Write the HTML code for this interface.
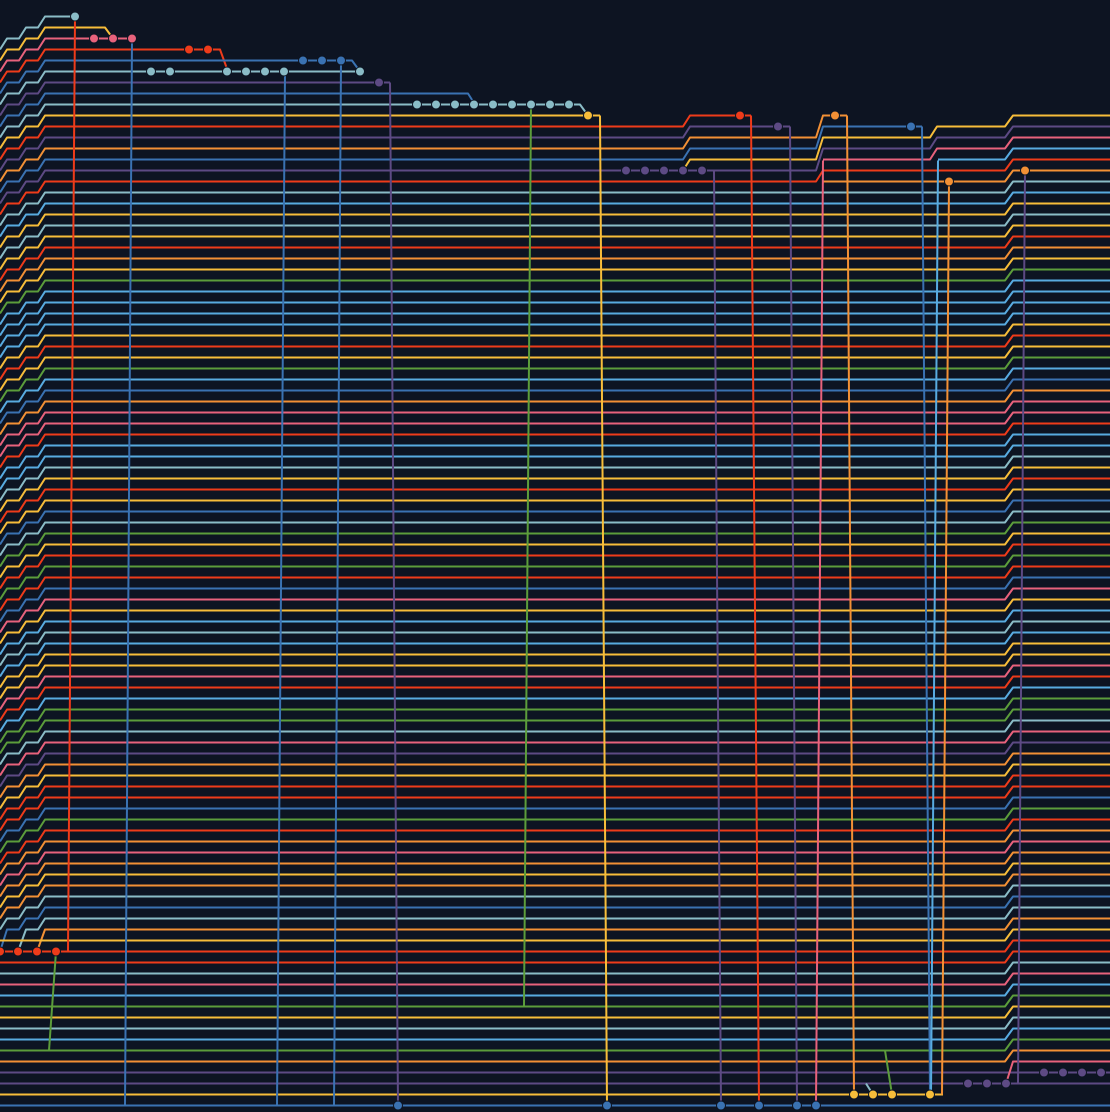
<!DOCTYPE html>
<html><head><meta charset="utf-8">
<style>
html,body{margin:0;padding:0;background:#0d1422;}
svg{display:block;}
</style></head>
<body>
<svg id="g" width="1110" height="1112" viewBox="0 0 1110 1112" xmlns="http://www.w3.org/2000/svg">
<rect width="1110" height="1112" fill="#0d1422"/>
</svg>
<script>
(function(){
var C={Y:"#f7bd3a",O:"#f29035",R:"#ee3b1a",P:"#5d4a84",B:"#3a72b2",C:"#8abcc7",L:"#58abe0",G:"#5c9d3b",K:"#e8627c"};
var cols="CYKRBCPBC"+"YRPOBPRCLYCYROYGLLLLYRYGLBOKKRL"+"LCYRYBCGYRGRBKYLCLYYKRLGGCKPOY"+"RRBGROKOYOCBCOYRRCKLGYCLGOPPYB";
function Y(k){return 16.5+11*k;}
var svg=document.getElementById("g");
var paths=[],verts=[],dots=[];
function P(c,d){paths.push([c,d]);}
function st(k){return "M0,"+Y(k+3)+" L7,"+Y(k+2)+" H19 L26,"+Y(k+1)+" H38 L45,"+Y(k);}
P("C",st(0)+" H75");
P("Y",st(1)+" H105 L113,"+Y(2));
P("K",st(2)+" H132");
P("R",st(3)+" H220 L228,"+Y(5));
P("B",st(4)+" H352 L360,"+Y(5));
P("C",st(5)+" H360");
P("P",st(6)+" H390");
P("B",st(7)+" H468 L475,"+Y(8));
P("C",st(8)+" H580 L588,"+Y(9));
P("Y",st(9)+" H600");
P("R",st(10)+" H683 L690,"+Y(9)+" H751");
P("P",st(11)+" H683 L690,"+Y(10)+" H790");
P("O",st(12)+" H683 L690,"+Y(11)+" H816 L823,"+Y(9)+" H847");
P("B",st(13)+" H683 L690,"+Y(12)+" H816 L823,"+Y(10)+" H922");
P("P",st(14)+" H816 L823,"+Y(12)+" H930 L937,"+Y(11)+" H1005 L1013,"+Y(10)+" H1110");
P("Y","M683,"+Y(14)+" L690,"+Y(13)+" H816 L823,"+Y(11)+" H930 L937,"+Y(10)+" H1005 L1013,"+Y(9)+" H1110");
P("R",st(15)+" H816 L823,"+Y(14)+" H1005 L1013,"+Y(13)+" H1110");
P("K","M823,"+Y(13)+" H930 L937,"+Y(12)+" H1005 L1013,"+Y(11)+" H1110");
P("L","M938,"+Y(13)+" H1005 L1013,"+Y(12)+" H1110");
P("O","M823,"+Y(15)+" H1005 L1013,"+Y(14)+" H1110");
for(var k=16;k<=99;k++){
  var c=cols[k],left;
  if(k<=80) left=st(k);
  else if(k==81) left="M0,"+Y(85)+" L7,"+Y(83)+" H19 L26,"+Y(82)+" H38 L45,"+Y(81);
  else if(k==82) left="M18,"+Y(85)+" L26,"+Y(83)+" H38 L45,"+Y(82);
  else if(k==83) left="M37,"+Y(85)+" L45,"+Y(83);
  else left="M0,"+Y(k);
  var right;
  if(k<=95) right=" H1005 L1013,"+Y(k-1)+" H1110";
  else if(k==98) right=" H943";
  else right=" H1110";
  P(c,left+right);
}
P("K","M1006,"+Y(97)+" L1013,"+Y(95)+" H1110");
function V(c,x1,y1,x2,y2){verts.push([c,x1,y1+0.5,x2,y2+0.5]);}
V("R",75,16,68,951);V("R",68,951,56,951);
V("B",132,38,125,1105);
V("B",285,71,277,1105);
V("B",341,60,334,1105);
V("P",390,82,398,1105);
V("G",531,104,524,1005);
V("Y",600,115,607,1105);
V("P",714,171,721,1105);
V("R",751,115,759,1105);
V("P",790,126,797,1105);
V("K",823,160,816,1105);
V("O",847,115,854,1094);
V("B",922,126,930,1094);
V("L",938,160,931,1094);
V("O",949,181,942,1094);
V("P",1025,171,1018,1083);
V("G",885,1050,892,1094);
V("C",866,1083,873,1094);
V("G",56,951,49,1050);
function D(c,xs,k){xs.forEach(function(x){dots.push([c,x,Y(k)]);});}
D("C",[75],0);D("K",[94,113,132],2);D("R",[189,208],3);D("B",[303,322,341],4);
D("C",[151,170,227,246,265,284,360],5);D("P",[379],6);
D("C",[417,436,455,474,493,512,531,550,569],8);
D("Y",[588],9);D("R",[740],9);D("P",[778],10);D("O",[835],9);D("B",[911],10);
D("P",[626,645,664,683,702],14);D("O",[949],15);D("O",[1025],14);
D("R",[0,18,37,56],85);D("P",[968,987,1006],97);D("P",[1044,1063,1082,1101],96);
D("Y",[854,873,892,930],98);D("B",[398,607,721,759,797,816],99);
var h="";
paths.forEach(function(p){h+='<path d="'+p[1]+'" fill="none" stroke="'+C[p[0]]+'" stroke-width="2" stroke-linejoin="round"/>';});
verts.forEach(function(v){h+='<line x1="'+v[1]+'" y1="'+v[2]+'" x2="'+v[3]+'" y2="'+v[4]+'" stroke="'+C[v[0]]+'" stroke-width="2"/>';});
dots.forEach(function(d){h+='<circle cx="'+d[1]+'" cy="'+d[2]+'" r="4.5" fill="'+C[d[0]]+'" stroke="#0d1422" stroke-width="1"/>';});
svg.insertAdjacentHTML("beforeend",h);
})();
</script>
</body></html>
